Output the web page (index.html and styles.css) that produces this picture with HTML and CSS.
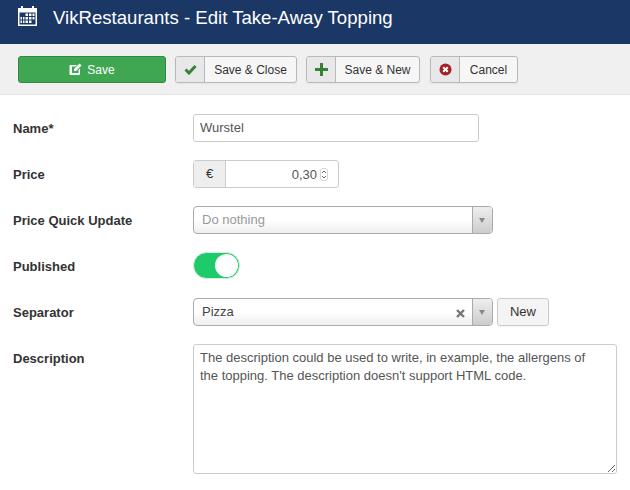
FILE: index.html
```html
<!DOCTYPE html>
<html lang="en">
<head>
  <meta charset="UTF-8" />
  <title>VikRestaurants - Edit Take-Away Topping</title>
  <link rel="stylesheet" href="styles.css">
</head>
<body>
  <header class="page-title">
    <svg class="title-icon" width="19" height="20" viewBox="0 0 19 20">
      <path fill="#fff" d="M0 2h3V0h2v2h9V0h2v2h3v18H0z"/>
      <rect x="1.500" y="6.500" width="16" height="12" fill="#1a3766"/>
      <g fill="#fff">
        <rect x="7.500" y="7.500" width="2.500" height="2.500"/><rect x="11" y="7.500" width="2.500" height="2.500"/><rect x="14.500" y="7.500" width="2" height="2.500"/>
        <rect x="2.500" y="11" width="1.500" height="2.500"/><rect x="5" y="11" width="1.500" height="2.500"/><rect x="7.500" y="11" width="2.500" height="2.500"/><rect x="11" y="11" width="2.500" height="2.500"/><rect x="14.500" y="11" width="2" height="2.500"/>
        <rect x="2.500" y="14.500" width="1.500" height="2.500"/><rect x="5" y="14.500" width="1.500" height="2.500"/><rect x="7.500" y="14.500" width="2.500" height="2.500"/><rect x="11" y="14.500" width="2.500" height="2.500"/>
      </g>
    </svg>
    <h1>VikRestaurants - Edit Take-Away Topping</h1>
  </header>

  <div class="toolbar">
    <button class="btn-save">
      <svg width="13" height="13" viewBox="0 0 13 13">
        <path fill="#fff" d="M1.500 2H8L6.500 3.500h-3.500v6.500h6.500V7L11 5.500v5.500a1 1 0 0 1-1 1H1.500a1 1 0 0 1-1-1V3a1 1 0 0 1 1-1z"/>
        <path fill="#fff" d="M10.500.5l2 2L7 8H5V6z"/>
      </svg>
      Save
    </button>
    <button class="btn-split btn-close">
      <span class="btn-icon">
        <svg width="13" height="11" viewBox="0 0 13 11"><path fill="none" stroke="#378137" stroke-width="3" d="M1.500 5.500l3.500 3.500 6.500-7"/></svg>
      </span>
      <span class="btn-text">Save &amp; Close</span>
    </button>
    <button class="btn-split btn-add">
      <span class="btn-icon">
        <svg width="13" height="13" viewBox="0 0 13 13"><path fill="#378137" d="M5 0h3v5h5v3H8v5H5V8H0V5h5z"/></svg>
      </span>
      <span class="btn-text">Save &amp; New</span>
    </button>
    <button class="btn-split btn-cancel">
      <span class="btn-icon">
        <svg width="13" height="13" viewBox="0 0 13 13">
          <circle cx="6.500" cy="6.500" r="6" fill="#a51f24"/>
          <path stroke="#fff" stroke-width="2" d="M4.200 4.200l4.600 4.600M8.800 4.200l-4.600 4.600"/>
        </svg>
      </span>
      <span class="btn-text">Cancel</span>
    </button>
  </div>

  <form class="form">
    <div class="form-row">
      <label>Name*</label>
      <div class="text-input name-input">Wurstel</div>
    </div>

    <div class="form-row">
      <label>Price</label>
      <div class="price-group">
        <span class="price-addon">€</span>
        <span class="price-value">0,30</span>
        <span class="spinner">
          <svg width="6" height="9" viewBox="0 0 6 9"><path fill="none" stroke="#666" d="M1 3l2-2 2 2M1 6l2 2 2-2"/></svg>
        </span>
      </div>
    </div>

    <div class="form-row">
      <label>Price Quick Update</label>
      <div class="select">
        <span class="select-value placeholder">Do nothing</span>
        <span class="select-arrow"></span>
      </div>
    </div>

    <div class="form-row">
      <label>Published</label>
      <div class="toggle"><span class="toggle-knob"></span></div>
    </div>

    <div class="form-row">
      <label>Separator</label>
      <div class="select">
        <span class="select-value">Pizza</span>
        <svg class="select-clear" width="9" height="9" viewBox="0 0 9 9"><path stroke="#777" stroke-width="2.400" d="M1 1l7 7M8 1L1 8"/></svg>
        <span class="select-arrow"></span>
      </div>
      <button type="button" class="btn-new">New</button>
    </div>

    <div class="form-row">
      <label>Description</label>
      <textarea class="description">The description could be used to write, in example, the allergens of the topping. The description doesn't support HTML code.</textarea>
    </div>
  </form>
</body>
</html>
```
FILE: styles.css
```css
body {
  margin: 0;
  font-family: "Liberation Sans", Arial, sans-serif;
  font-size: 13px;
  color: #333;
  background: #fff;
  overflow: hidden;
}
.page-title {
  height: 44px;
  background: #1a3766;
  display: flex;
  align-items: center;
  padding-left: 18px;
  gap: 16px;
}
.title-icon {
  margin-top: -12px;
}
.page-title h1 {
  margin: -8px 0 0;
  font-size: 18.600px;
  font-weight: normal;
  color: #fff;
}
.toolbar {
  height: 51px;
  box-sizing: border-box;
  background: #f0f0f0;
  border-bottom: 1px solid #e3e3e3;
  padding: 12px 0 0 18px;
  display: flex;
  align-items: flex-start;
  gap: 9px;
}
button {
  font-family: inherit;
  font-size: 12px;
  height: 27px;
  padding: 0;
  border-radius: 3px;
}
.btn-save {
  width: 148px;
  background: #3fa652;
  border: 1px solid #34893f;
  color: #fff;
  display: flex;
  align-items: center;
  justify-content: center;
  gap: 5px;
}
.btn-split {
  display: flex;
  align-items: stretch;
  background: #f6f6f6;
  border: 1px solid #b9b9b9;
  color: #333;
  box-shadow: 0 1px 2px rgba(0,0,0,0.05);
}
.btn-close {
  width: 122px;
}
.btn-add {
  width: 114px;
}
.btn-cancel {
  width: 88px;
  margin-left: 1px;
}
.btn-icon {
  width: 28px;
  background: #e8e8e8;
  border-right: 1px solid #b9b9b9;
  display: flex;
  align-items: center;
  justify-content: center;
  border-radius: 2px 0 0 2px;
}
.btn-text {
  flex: 1;
  display: flex;
  align-items: center;
  justify-content: center;
}
.form {
  padding: 19px 13px 0;
  display: flex;
  flex-direction: column;
  gap: 18px;
}
.form-row {
  display: flex;
  align-items: flex-start;
}
.form-row label {
  width: 180px;
  height: 28px;
  flex-shrink: 0;
  font-weight: bold;
  line-height: 30px;
  color: #333;
}
.text-input {
  box-sizing: border-box;
  height: 28px;
  line-height: 26px;
  padding: 0 6px;
  border: 1px solid #ccc;
  border-radius: 3px;
  background: #fff;
  color: #555;
}
.name-input {
  width: 286px;
}
.price-group {
  box-sizing: border-box;
  width: 146px;
  height: 28px;
  display: flex;
  align-items: center;
  border: 1px solid #ccc;
  border-radius: 3px;
  color: #555;
}
.price-addon {
  width: 31px;
  height: 26px;
  line-height: 26px;
  text-align: center;
  background: #eee;
  border-right: 1px solid #ccc;
  color: #333;
}
.price-value {
  flex: 1;
  text-align: right;
}
.spinner {
  box-sizing: border-box;
  width: 8px;
  height: 13px;
  margin: 0 10px 0 3px;
  border: 1px solid #d4d4d4;
  border-radius: 3px;
  display: flex;
  align-items: center;
  justify-content: center;
}
.spinner svg {
  flex-shrink: 0;
}
.select {
  box-sizing: border-box;
  width: 300px;
  height: 28px;
  display: flex;
  align-items: center;
  border: 1px solid #aaa;
  border-radius: 4px;
  background: linear-gradient(#fff 50%, #eee 100%);
  color: #444;
}
.select-value {
  flex: 1;
  padding-left: 8px;
  margin-top: -2px;
}
.placeholder {
  color: #999;
}
.select-clear {
  margin-right: 7px;
  margin-top: 3px;
}
.select-arrow {
  width: 19px;
  height: 26px;
  border-left: 1px solid #aaa;
  background: linear-gradient(#eee, #ccc);
  border-radius: 0 3px 3px 0;
  position: relative;
}
.select-arrow::after {
  content: "";
  position: absolute;
  left: 6px;
  top: 11px;
  border-left: 3.500px solid transparent;
  border-right: 3.500px solid transparent;
  border-top: 5px solid #888;
}
.toggle {
  box-sizing: border-box;
  width: 47px;
  height: 27px;
  border-radius: 14px;
  background: #1ecb6b;
  border: 1px solid #d5efe0;
  display: flex;
  justify-content: flex-end;
  align-items: center;
  padding-right: 1px;
}
.toggle-knob {
  width: 23px;
  height: 23px;
  border-radius: 50%;
  background: #fff;
}
.btn-new {
  width: 52px;
  height: 28px;
  margin-left: 4px;
  padding-bottom: 2px;
  font-size: 13px;
  background: #f4f4f4;
  border: 1px solid #ccc;
  color: #333;
  box-shadow: 0 1px 2px rgba(0,0,0,0.05);
}
.description {
  box-sizing: border-box;
  width: 424px;
  height: 130px;
  margin: 0;
  padding: 4px 14px 4px 6px;
  border: 1px solid #ccc;
  border-radius: 3px;
  font-family: inherit;
  font-size: 13px;
  line-height: 18px;
  color: #555;
}
```
